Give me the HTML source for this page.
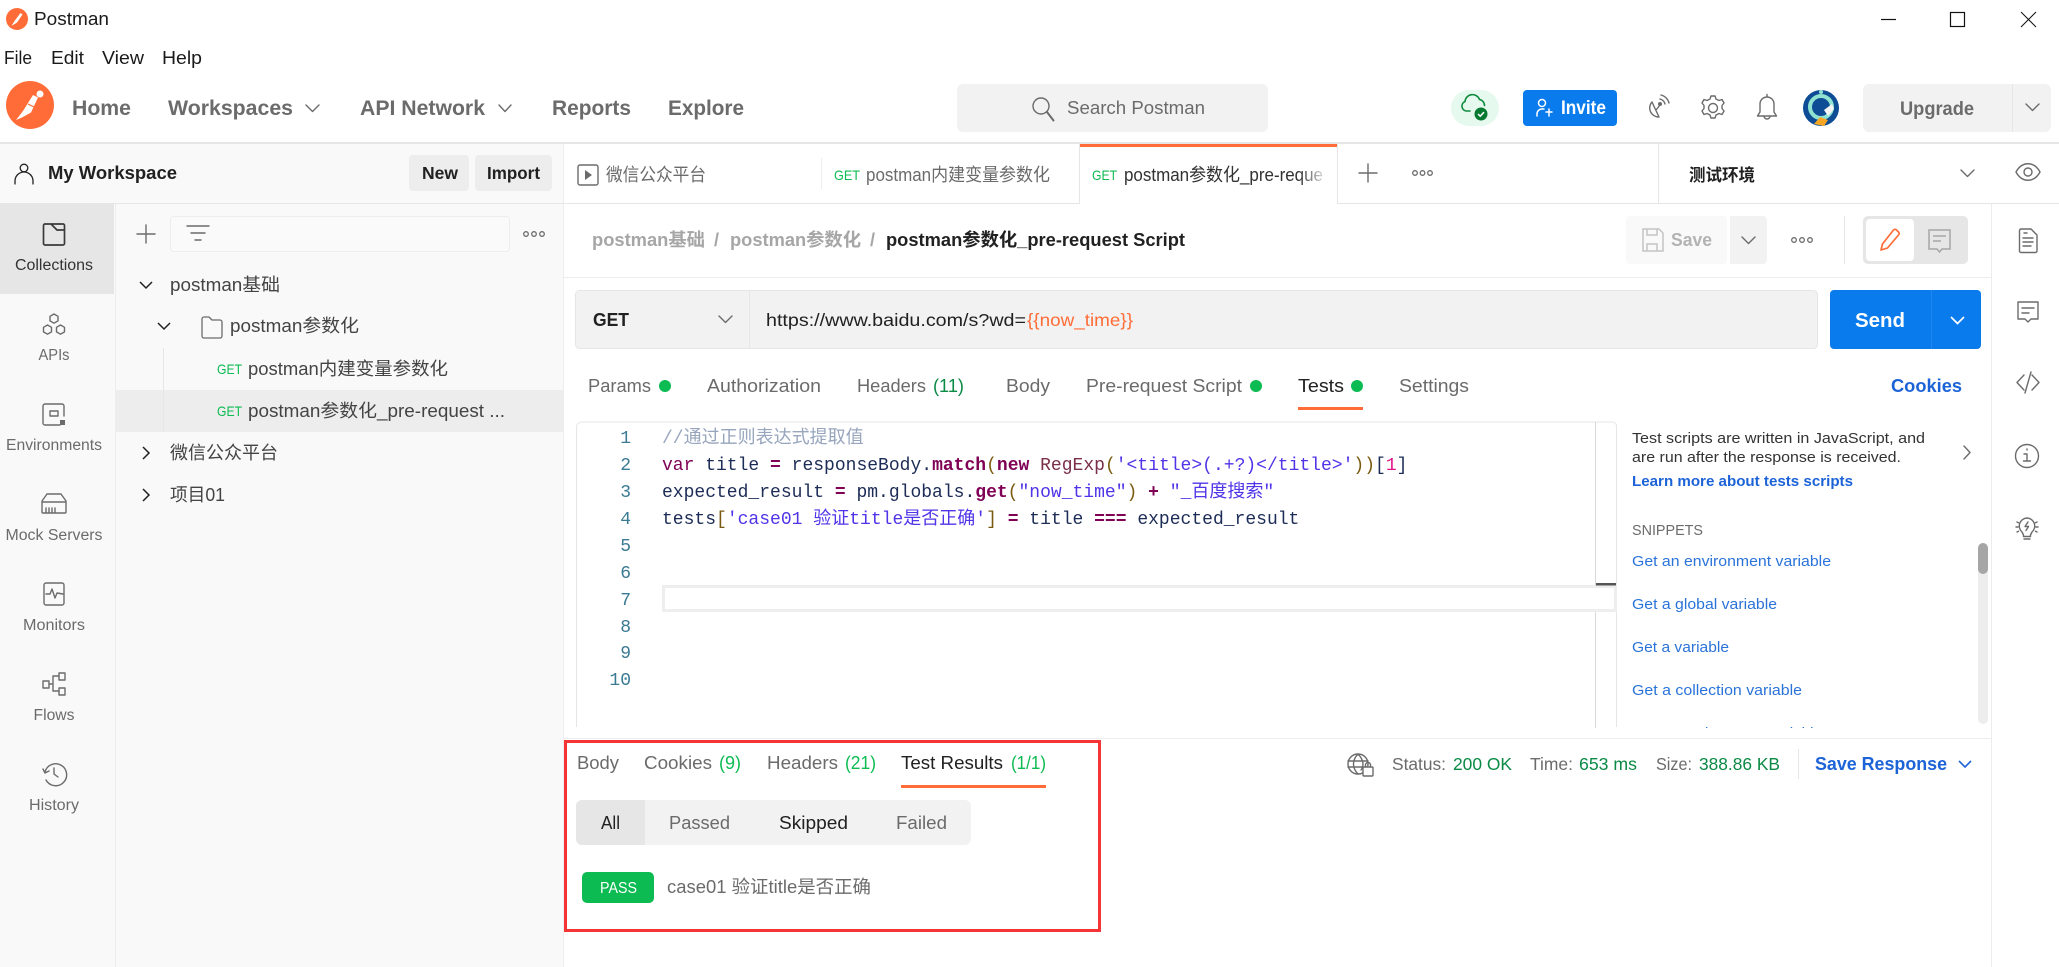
<!DOCTYPE html>
<html lang="zh"><head><meta charset="utf-8"><title>Postman</title>
<style>
html,body{margin:0;padding:0;background:#fff;width:2059px;height:967px;overflow:hidden}
svg{display:block}
text{font-family:"Liberation Sans","Noto Sans CJK SC",sans-serif;font-size:18px;fill:#6b6b6b;white-space:pre}
.b{font-weight:700}
.d{fill:#212121}
.m{font-family:"Liberation Mono","Noto Sans CJK SC",monospace;fill:#1c2c56}
.k{font-weight:700;fill:#7f0055}
.s{fill:#4f34e8}
.n{fill:#3a7a92;font-family:"Liberation Mono",monospace}
.g{fill:#0cbb52;font-size:14px}
.ln{fill:none;stroke:#6b6b6b;stroke-width:1.4;stroke-linecap:round;stroke-linejoin:round}
.a{fill:#1d63d8}
.gr{fill:#0a8a45}
</style></head>
<body>
<svg xmlns="http://www.w3.org/2000/svg" width="2059" height="967" viewBox="0 0 2059 967">
<rect width="2059" height="967" fill="#fff"/>

<!-- title bar -->
<circle cx="17" cy="19" r="11" fill="#ff6c37"/>
<path d="M11.500 26l3-5 6-8 2 1.500-5.500 8z" fill="#fff"/>
<text x="34" y="25" style="font-size:18px;fill:#1a1a1a" textLength="75" lengthAdjust="spacingAndGlyphs">Postman</text>
<text x="4" y="64" style="fill:#1a1a1a" textLength="28" lengthAdjust="spacingAndGlyphs">File</text>
<text x="51" y="64" style="fill:#1a1a1a" textLength="33" lengthAdjust="spacingAndGlyphs">Edit</text>
<text x="102" y="64" style="fill:#1a1a1a" textLength="42" lengthAdjust="spacingAndGlyphs">View</text>
<text x="162" y="64" style="fill:#1a1a1a" textLength="40" lengthAdjust="spacingAndGlyphs">Help</text>
<path d="M1881 19.500h15" stroke="#111" stroke-width="1.200"/>
<rect x="1950.500" y="12.500" width="14" height="14" fill="none" stroke="#111" stroke-width="1.200"/>
<path d="M2021 12l15 15M2036 12l-15 15" stroke="#111" stroke-width="1"/>

<!-- main nav -->
<circle cx="30" cy="105" r="24" fill="#ff6c37"/>
<path d="M16 120l7-9 10-16 5 2.500-7 15-9 5z" fill="#fff"/>
<circle cx="40" cy="94" r="3.500" fill="#fff"/>
<path d="M28 104l8 4" stroke="#ff6c37" stroke-width="1.200"/>
<text class="b" x="72" y="115" style="font-size:21px" textLength="59" lengthAdjust="spacingAndGlyphs">Home</text>
<text class="b" x="168" y="115" style="font-size:21px" textLength="125" lengthAdjust="spacingAndGlyphs">Workspaces</text>
<text class="b" x="360" y="115" style="font-size:21px" textLength="125" lengthAdjust="spacingAndGlyphs">API Network</text>
<text class="b" x="552" y="115" style="font-size:21px" textLength="79" lengthAdjust="spacingAndGlyphs">Reports</text>
<text class="b" x="668" y="115" style="font-size:21px" textLength="76" lengthAdjust="spacingAndGlyphs">Explore</text>
<path class="ln" d="M306 105l6.500 6.500 6.500-6.500M499 105l6 6.500 6-6.500"/>
<rect x="957" y="84" width="311" height="48" rx="6" fill="#f2f2f2"/>
<circle cx="1041" cy="106" r="8" class="ln"/>
<path class="ln" d="M1047 112l6.500 8.500" style="stroke-width:2"/>
<text x="1067" y="114" textLength="138" lengthAdjust="spacingAndGlyphs">Search Postman</text>

<rect x="1451" y="90" width="48" height="36" rx="18" fill="#e5f9ee"/>
<path d="M1470 111h-4a5 5 0 0 1-1-9.500 7.500 7.500 0 0 1 14.500-2 6 6 0 0 1 5 6" fill="none" stroke="#0f8a3f" stroke-width="1.600" stroke-linecap="round"/>
<circle cx="1481" cy="114" r="6.500" fill="#067a30"/>
<path d="M1478 114l2.200 2.200 3.800-4" fill="none" stroke="#fff" stroke-width="1.500"/>
<rect x="1523" y="90" width="94" height="36" rx="4" fill="#097bed"/>
<circle cx="1542" cy="103" r="3.500" fill="none" stroke="#fff" stroke-width="1.500"/>
<path d="M1537 116v-2a5 5 0 0 1 5-5h2M1546 112h6M1549 109v7" fill="none" stroke="#fff" stroke-width="1.500" stroke-linecap="round"/>
<text class="b" x="1561" y="114" style="fill:#fff;font-size:19px" textLength="45" lengthAdjust="spacingAndGlyphs">Invite</text>
<path class="ln" d="M1652 102a9 9 0 0 0 7 15zM1656 110l4-5M1660 99a7 7 0 0 1 5 5M1661 95a11 11 0 0 1 8 8"/>
<circle cx="1660" cy="104" r="2" fill="#6b6b6b"/>
<path class="ln" d="M1711 96h4l1 3 3 1.500 3-1 2 3.500-2 2.500v3l2 2.500-2 3.500-3-1-3 1.500-1 3h-4l-1-3-3-1.500-3 1-2-3.500 2-2.500v-3l-2-2.500 2-3.500 3 1 3-1.500z"/>
<circle class="ln" cx="1713" cy="108" r="4.500"/>
<path class="ln" d="M1767 97a7 7 0 0 0-7 7v8l-2.500 4h19l-2.500-4v-8a7 7 0 0 0-7-7zM1767 97v-2.500M1764 116a3 3 0 0 0 6 0"/>
<circle cx="1821" cy="108" r="18" fill="#0e4d96"/>
<circle cx="1821" cy="107" r="11" fill="none" stroke="#8fe3d0" stroke-width="4"/>
<path d="M1824 110l8-6 2 5-6 7z" fill="#f4f4f4"/>
<path d="M1814 124l6-7 8 3-4 6z" fill="#f5a623"/>
<circle cx="1821" cy="92" r="2" fill="#8fe3d0"/>
<rect x="1863" y="84" width="188" height="48" rx="6" fill="#f2f2f2"/>
<path d="M2012.500 84v48" stroke="#e6e6e6"/>
<text class="b" x="1900" y="115" style="font-size:19px" textLength="74" lengthAdjust="spacingAndGlyphs">Upgrade</text>
<path class="ln" d="M2026 104l6.500 6.500 6.500-6.500"/>

<rect x="0" y="142" width="2059" height="2" fill="#e6e6e6"/>

<!-- left sidebar -->
<rect x="0" y="144" width="563" height="823" fill="#f9f9f9"/>
<rect x="563" y="144" width="1" height="823" fill="#ededed"/>
<rect x="0" y="203" width="2059" height="1" fill="#e6e6e6"/>
<circle class="ln" cx="24" cy="168" r="3.800" style="stroke:#212121;stroke-width:1.300"/>
<path class="ln" d="M15 184v-3a7.500 7.500 0 0 1 18 0v3" style="stroke:#212121;stroke-width:1.300"/>
<text class="b d" x="48" y="179" style="font-size:18.500px" textLength="129" lengthAdjust="spacingAndGlyphs">My Workspace</text>
<rect x="409" y="155" width="60" height="36" rx="4" fill="#ededed"/>
<text class="b d" x="422" y="179" style="font-size:17.500px" textLength="36" lengthAdjust="spacingAndGlyphs">New</text>
<rect x="475" y="155" width="77" height="36" rx="4" fill="#ededed"/>
<text class="b d" x="487" y="179" style="font-size:17.500px" textLength="53" lengthAdjust="spacingAndGlyphs">Import</text>

<rect x="0" y="204" width="114" height="90" fill="#e6e6e6"/>
<rect x="115" y="204" width="1" height="763" fill="#ededed"/>
<path d="M45 224h18a1.500 1.500 0 0 1 1.500 1.500v18a1.500 1.500 0 0 1-1.500 1.500h-18a1.500 1.500 0 0 1-1.500-1.500v-18a1.500 1.500 0 0 1 1.500-1.500zM51 224l6 6h7.500" fill="none" stroke="#3a3a3a" stroke-width="1.700" stroke-linejoin="round"/>
<g style="text-anchor:middle">
<text x="54" y="270" style="font-size:15.500px;fill:#333" textLength="78" lengthAdjust="spacingAndGlyphs">Collections</text>
<text x="54" y="360" style="font-size:15.500px" textLength="31" lengthAdjust="spacingAndGlyphs">APIs</text>
<text x="54" y="450" style="font-size:15.500px" textLength="96" lengthAdjust="spacingAndGlyphs">Environments</text>
<text x="54" y="540" style="font-size:15.500px" textLength="97" lengthAdjust="spacingAndGlyphs">Mock Servers</text>
<text x="54" y="630" style="font-size:15.500px" textLength="62" lengthAdjust="spacingAndGlyphs">Monitors</text>
<text x="54" y="720" style="font-size:15.500px" textLength="41" lengthAdjust="spacingAndGlyphs">Flows</text>
<text x="54" y="810" style="font-size:15.500px" textLength="50" lengthAdjust="spacingAndGlyphs">History</text>
</g>
<path class="ln" d="M54 314l4 2.300v4.600l-4 2.300-4-2.300v-4.600zM47.500 325l4 2.300v4.600l-4 2.300-4-2.300v-4.600zM60.500 325l4 2.300v4.600l-4 2.300-4-2.300v-4.600z"/>
<path class="ln" d="M64 416v-10a2 2 0 0 0-2-2h-17a2 2 0 0 0-2 2v17a2 2 0 0 0 2 2h15"/>
<rect class="ln" x="50" y="411" width="8" height="5"/>
<rect x="60" y="420" width="5" height="5" fill="#6b6b6b"/>
<path class="ln" d="M47 494h14l5 7v11a1 1 0 0 1-1 1h-22a1 1 0 0 1-1-1v-11zM42 502h24M46 513v-5M49 513v-5M52 513v-5M55 513v-5"/>
<rect class="ln" x="44" y="583" width="20" height="22" rx="2"/>
<path class="ln" d="M46 594h4l2-5 3 9 2-5 6 1"/>
<rect class="ln" x="43" y="681" width="6" height="7"/>
<rect class="ln" x="59" y="673" width="6" height="7"/>
<rect class="ln" x="59" y="688" width="6" height="7"/>
<path class="ln" d="M49 684h4M53 676v15M53 676h6M53 691h6"/>
<path class="ln" d="M45 772a11 11 0 1 1 1 8M43 769l2 4 4-2M54 768v6l4 3"/>

<!-- sidebar tree -->
<path class="ln" d="M146 225v18M137 234h18"/>
<rect x="170.500" y="216.500" width="339" height="35" rx="3" fill="#fafafa" stroke="#ededed"/>
<path class="ln" d="M187 226h22M191 233h14M195 240h6"/>
<g fill="none" stroke="#6b6b6b" stroke-width="1.300">
<circle cx="526" cy="234" r="2.300"/><circle cx="534" cy="234" r="2.300"/><circle cx="542" cy="234" r="2.300"/>
</g>
<path d="M140 282l6 6 6-6" fill="none" stroke="#212121" stroke-width="1.500"/>
<text x="170" y="291" textLength="110" lengthAdjust="spacingAndGlyphs" style="fill:#444">postman基础</text>
<path d="M158 323l6 6 6-6" fill="none" stroke="#212121" stroke-width="1.500"/>
<path class="ln" d="M202 336v-17a2 2 0 0 1 2-2h5l3 3h8a2 2 0 0 1 2 2v14a2 2 0 0 1-2 2h-16a2 2 0 0 1-2-2z" style="stroke-width:1.300"/>
<text x="230" y="332" textLength="129" lengthAdjust="spacingAndGlyphs" style="fill:#444">postman参数化</text>
<rect x="116" y="390" width="447" height="42" fill="#ededed"/>
<rect x="163" y="348" width="1" height="84" fill="#e6e6e6"/>
<text class="g" x="217" y="374" textLength="25" lengthAdjust="spacingAndGlyphs">GET</text>
<text x="248" y="375" textLength="200" lengthAdjust="spacingAndGlyphs" style="fill:#444">postman内建变量参数化</text>
<text class="g" x="217" y="416" textLength="25" lengthAdjust="spacingAndGlyphs">GET</text>
<text x="248" y="417" textLength="257" lengthAdjust="spacingAndGlyphs" style="fill:#444">postman参数化_pre-request ...</text>
<path d="M143 459l6-6-6-6M143 501l6-6-6-6" fill="none" stroke="#212121" stroke-width="1.500"/>
<text x="170" y="459" textLength="108" lengthAdjust="spacingAndGlyphs" style="fill:#444">微信公众平台</text>
<text x="170" y="501" textLength="55" lengthAdjust="spacingAndGlyphs" style="fill:#444">项目01</text>

<!-- request tabs -->
<rect x="564" y="144" width="1495" height="59" fill="#fff"/>
<rect x="564" y="203" width="1495" height="1" fill="#e6e6e6"/>
<rect x="578" y="165" width="20" height="20" rx="2" fill="none" stroke="#6b6b6b" stroke-width="1.400"/>
<path d="M585 170v10l7-5z" fill="#6b6b6b"/>
<text x="606" y="181" textLength="100" lengthAdjust="spacingAndGlyphs">微信公众平台</text>
<rect x="821" y="158" width="1" height="31" fill="#ededed"/>
<text class="g" x="834" y="180" textLength="26" lengthAdjust="spacingAndGlyphs">GET</text>
<text x="866" y="181" textLength="184" lengthAdjust="spacingAndGlyphs">postman内建变量参数化</text>
<rect x="1080" y="144" width="257" height="60" fill="#fff"/>
<rect x="1079" y="144" width="1" height="60" fill="#e6e6e6"/>
<rect x="1337" y="144" width="1" height="60" fill="#e6e6e6"/>
<rect x="1080" y="144" width="257" height="3" fill="#ff6c37"/>
<text class="g" x="1092" y="180" textLength="25" lengthAdjust="spacingAndGlyphs">GET</text>
<defs><linearGradient id="fd" x1="0" x2="1" y1="0" y2="0"><stop offset=".88" stop-color="#333"/><stop offset="1" stop-color="#d8d8d8"/></linearGradient></defs>
<text x="1124" y="181" style="fill:url(#fd)" textLength="199" lengthAdjust="spacingAndGlyphs">postman参数化_pre-reque</text>
<path class="ln" d="M1368 164v18M1359 173h18"/>
<g fill="none" stroke="#6b6b6b" stroke-width="1.300">
<circle cx="1415" cy="173" r="2.300"/><circle cx="1422.500" cy="173" r="2.300"/><circle cx="1430" cy="173" r="2.300"/>
</g>
<rect x="1658" y="144" width="1" height="59" fill="#e6e6e6"/>
<text class="b d" x="1689" y="181" style="font-size:17px" textLength="66" lengthAdjust="spacingAndGlyphs">测试环境</text>
<path class="ln" d="M1961 170l6.500 6.500 6.500-6.500"/>
<path class="ln" d="M2016 172c6-11 18-11 24 0-6 11-18 11-24 0z"/>
<circle class="ln" cx="2028" cy="172" r="4"/>

<!-- breadcrumb -->
<text class="b" x="592" y="246" style="fill:#a6a6a6" textLength="113" lengthAdjust="spacingAndGlyphs">postman基础</text>
<text class="b" x="714" y="246" style="fill:#a6a6a6">/</text>
<text class="b" x="730" y="246" style="fill:#a6a6a6" textLength="131" lengthAdjust="spacingAndGlyphs">postman参数化</text>
<text class="b" x="870" y="246" style="fill:#a6a6a6">/</text>
<text class="b d" x="886" y="246" textLength="299" lengthAdjust="spacingAndGlyphs">postman参数化_pre-request Script</text>
<rect x="1626" y="216" width="101" height="48" rx="4" fill="#f9f9f9"/>
<path d="M1643 229h16l4 4v18h-20z" fill="none" stroke="#c4c4c4" stroke-width="1.500"/>
<path d="M1647 229v6h10v-6M1647 251v-7h10v7" fill="none" stroke="#c4c4c4" stroke-width="1.500"/>
<text class="b" x="1671" y="246" style="fill:#b3b3b3" textLength="41" lengthAdjust="spacingAndGlyphs">Save</text>
<path d="M1730 216h33a4 4 0 0 1 4 4v40a4 4 0 0 1-4 4h-33z" fill="#f2f2f2"/>
<path class="ln" d="M1742 237l6.500 6.500 6.500-6.500"/>
<g fill="none" stroke="#6b6b6b" stroke-width="1.300">
<circle cx="1794" cy="240" r="2.300"/><circle cx="1802" cy="240" r="2.300"/><circle cx="1810" cy="240" r="2.300"/>
</g>
<rect x="1844" y="216" width="1" height="48" fill="#e6e6e6"/>
<rect x="1863" y="216" width="105" height="48" rx="5" fill="#e6e6e6"/>
<rect x="1866" y="219" width="48" height="42" rx="4" fill="#fff"/>
<path d="M1881 250l1.500-6 11-14a2 2 0 0 1 3 0l2 2a2 2 0 0 1 0 3l-11 13z" fill="none" stroke="#ff6c37" stroke-width="1.700" stroke-linejoin="round"/>
<path d="M1929 230h21v19h-8l-2.500 3-2.500-3h-8zM1933 236h13M1933 241h8" fill="none" stroke="#a6a6a6" stroke-width="1.500"/>
<rect x="1991" y="204" width="1" height="763" fill="#ededed"/>
<rect x="564" y="277" width="1427" height="1" fill="#ededed"/>

<!-- right bar icons -->
<path class="ln" d="M2021 229h10l6 6v16a1.500 1.500 0 0 1-1.500 1.500h-14.500a1.500 1.500 0 0 1-1.500-1.500v-20.500a1.500 1.500 0 0 1 1.500-1.500zM2024 233h3M2023 238h10M2023 242h10M2023 246h8"/>
<path class="ln" d="M2018 302h20v17h-7l-3 3-3-3h-7zM2022 308h12M2022 313h7"/>
<path class="ln" d="M2024 375l-7 7.500 7 7.500M2032 375l7 7.500-7 7.500M2031 372l-6 21"/>
<circle class="ln" cx="2027" cy="456" r="11.500"/>
<path class="ln" d="M2027 449v1M2024 454h3v7M2023.500 461h7"/>
<path class="ln" d="M2027 518a8 8 0 0 0-5 14l1.500 3v1.500h7v-1.500l1.500-3a8 8 0 0 0-5-14zM2028 522l-3 4.500h3.500l-2.500 4M2024 539h6M2017 522l1.500 .8M2016 527h2M2017 532l1.500-.8M2037 522l-1.500 .8M2038 527h-2M2037 532l-1.500-.8"/>

<!-- URL row -->
<rect x="575.500" y="290.500" width="1242" height="58" rx="4" fill="#f2f2f2" stroke="#e6e6e6"/>
<rect x="749" y="291" width="1" height="57" fill="#e6e6e6"/>
<text class="b d" x="593" y="326" style="font-size:18px" textLength="36" lengthAdjust="spacingAndGlyphs">GET</text>
<path class="ln" d="M719 316l6.500 6.500 6.500-6.500"/>
<text x="766" y="326" style="fill:#212121;font-size:17.500px" textLength="260" lengthAdjust="spacingAndGlyphs">https://www.baidu.com/s?wd=</text>
<text x="1027" y="326" style="fill:#ff6c37;font-size:17.500px" textLength="106" lengthAdjust="spacingAndGlyphs">{{now_time}}</text>
<path d="M1834 290h143a4 4 0 0 1 4 4v51a4 4 0 0 1-4 4h-143a4 4 0 0 1-4-4v-51a4 4 0 0 1 4-4z" fill="#097bed"/>
<rect x="1931" y="290" width="1" height="59" fill="#1f87ee"/>
<text class="b" x="1855" y="327" style="fill:#fff;font-size:20px" textLength="50" lengthAdjust="spacingAndGlyphs">Send</text>
<path d="M1951 317l6.500 6.500 6.500-6.500" fill="none" stroke="#fff" stroke-width="1.700"/>

<!-- request sub tabs -->
<text x="588" y="392" textLength="63" lengthAdjust="spacingAndGlyphs">Params</text>
<circle cx="665" cy="386" r="6" fill="#0cbb52"/>
<text x="707" y="392" textLength="114" lengthAdjust="spacingAndGlyphs">Authorization</text>
<text x="857" y="392" textLength="69" lengthAdjust="spacingAndGlyphs">Headers</text>
<text x="933" y="392" class="gr" textLength="31" lengthAdjust="spacingAndGlyphs">(11)</text>
<text x="1006" y="392" textLength="44" lengthAdjust="spacingAndGlyphs">Body</text>
<text x="1086" y="392" textLength="156" lengthAdjust="spacingAndGlyphs">Pre-request Script</text>
<circle cx="1256" cy="386" r="6" fill="#0cbb52"/>
<text x="1298" y="392" class="d" textLength="46" lengthAdjust="spacingAndGlyphs">Tests</text>
<circle cx="1357" cy="386" r="6" fill="#0cbb52"/>
<rect x="1298" y="407" width="65" height="3" fill="#ff6c37"/>
<text x="1399" y="392" textLength="70" lengthAdjust="spacingAndGlyphs">Settings</text>
<text class="b a" x="1891" y="392" textLength="71" lengthAdjust="spacingAndGlyphs">Cookies</text>

<!-- editor -->
<path d="M576.500 727v-300a5 5 0 0 1 5-5h1031a4 4 0 0 1 4 4v301" fill="none" stroke="#e6e6e6"/>
<rect x="1595" y="422" width="1" height="306" fill="#d9d9d9"/>
<g style="text-anchor:end;font-size:18px">
<text class="n" x="631" y="443">1</text><text class="n" x="631" y="470">2</text><text class="n" x="631" y="497">3</text><text class="n" x="631" y="524">4</text><text class="n" x="631" y="551">5</text><text class="n" x="631" y="578">6</text><text class="n" x="631" y="605">7</text><text class="n" x="631" y="632">8</text><text class="n" x="631" y="658">9</text><text class="n" x="631" y="685">10</text>
</g>
<rect x="663.500" y="586.500" width="952" height="24" fill="#fff" stroke="#eeeeee" stroke-width="3"/>
<rect x="1596" y="583" width="20" height="2.500" fill="#555"/>
<text class="m" x="662" y="443" style="fill:#97a5bd">//通过正则表达式提取值</text>
<text class="m" x="662" y="470"><tspan class="k" style="font-weight:400">var</tspan> title <tspan class="k">=</tspan> responseBody.<tspan class="k">match</tspan><tspan style="fill:#7a5a10">(</tspan><tspan class="k">new</tspan> <tspan style="fill:#7a2e4a">RegExp</tspan><tspan style="fill:#7a5a10">(</tspan><tspan class="s">'&lt;title&gt;(.+?)&lt;/title&gt;'</tspan><tspan style="fill:#7a5a10">))</tspan>[<tspan style="fill:#e0128a">1</tspan>]</text>
<text class="m" x="662" y="497">expected_result <tspan class="k">=</tspan> pm.globals.<tspan class="k">get</tspan><tspan style="fill:#7a5a10">(</tspan><tspan class="s">"now_time"</tspan><tspan style="fill:#7a5a10">)</tspan> <tspan class="k">+</tspan> <tspan class="s">"_百度搜索"</tspan></text>
<text class="m" x="662" y="524">tests<tspan style="fill:#7a5a10">[</tspan><tspan class="s">'case01 验证title是否正确'</tspan><tspan style="fill:#7a5a10">]</tspan> <tspan class="k">=</tspan> title <tspan class="k">===</tspan> expected_result</text>

<!-- help panel -->
<text x="1632" y="443" style="font-size:15px;fill:#333" textLength="293" lengthAdjust="spacingAndGlyphs">Test scripts are written in JavaScript, and</text>
<text x="1632" y="462" style="font-size:15px;fill:#333" textLength="269" lengthAdjust="spacingAndGlyphs">are run after the response is received.</text>
<text class="b a" x="1632" y="486" style="font-size:15px" textLength="221" lengthAdjust="spacingAndGlyphs">Learn more about tests scripts</text>
<path class="ln" d="M1964 446l6 6.500-6 6.500"/>
<text x="1632" y="535" style="font-size:15px" textLength="71" lengthAdjust="spacingAndGlyphs">SNIPPETS</text>
<text x="1632" y="566" style="font-size:15px;fill:#2a73d9" textLength="199" lengthAdjust="spacingAndGlyphs">Get an environment variable</text>
<text x="1632" y="609" style="font-size:15px;fill:#2a73d9" textLength="145" lengthAdjust="spacingAndGlyphs">Get a global variable</text>
<text x="1632" y="652" style="font-size:15px;fill:#2a73d9" textLength="97" lengthAdjust="spacingAndGlyphs">Get a variable</text>
<text x="1632" y="695" style="font-size:15px;fill:#2a73d9" textLength="170" lengthAdjust="spacingAndGlyphs">Get a collection variable</text>
<text x="1632" y="738" style="font-size:15px;fill:#2a73d9" textLength="190" lengthAdjust="spacingAndGlyphs">Set an environment variable</text>
<rect x="1625" y="728" width="350" height="12" fill="#fff"/>
<rect x="1978" y="543" width="10" height="181" rx="5" fill="#ededed"/>
<rect x="1978" y="543" width="10" height="31" rx="5" fill="#a6a6a6"/>

<!-- response -->
<rect x="564" y="738" width="1427" height="1" fill="#ededed"/>
<rect x="565.500" y="741.500" width="534" height="189" fill="none" stroke="#f53535" stroke-width="3"/>
<text x="577" y="769" textLength="42" lengthAdjust="spacingAndGlyphs">Body</text>
<text x="644" y="769" textLength="68" lengthAdjust="spacingAndGlyphs">Cookies</text>
<text x="719" y="769" textLength="22" lengthAdjust="spacingAndGlyphs" style="fill:#0cbb52">(9)</text>
<text x="767" y="769" textLength="71" lengthAdjust="spacingAndGlyphs">Headers</text>
<text x="845" y="769" textLength="31" lengthAdjust="spacingAndGlyphs" style="fill:#0cbb52">(21)</text>
<text x="901" y="769" textLength="102" lengthAdjust="spacingAndGlyphs" class="d">Test Results</text>
<text x="1011" y="769" textLength="35" lengthAdjust="spacingAndGlyphs" style="fill:#0cbb52">(1/1)</text>
<rect x="901" y="785" width="145" height="3" fill="#ff6c37"/>
<rect x="576" y="800" width="395" height="45" rx="6" fill="#f2f2f2"/>
<path d="M582 800h63v45h-63a6 6 0 0 1-6-6v-33a6 6 0 0 1 6-6z" fill="#e6e6e6"/>
<text x="601" y="829" class="d" textLength="19" lengthAdjust="spacingAndGlyphs">All</text>
<text x="669" y="829" textLength="61" lengthAdjust="spacingAndGlyphs">Passed</text>
<text x="779" y="829" class="d" textLength="69" lengthAdjust="spacingAndGlyphs">Skipped</text>
<text x="896" y="829" textLength="51" lengthAdjust="spacingAndGlyphs">Failed</text>
<rect x="582" y="872" width="72" height="31" rx="5" fill="#0cbb52"/>
<text x="600" y="893" style="fill:#fff;font-size:15.500px" textLength="37" lengthAdjust="spacingAndGlyphs">PASS</text>
<text x="667" y="893" textLength="204" lengthAdjust="spacingAndGlyphs">case01 验证title是否正确</text>

<circle class="ln" cx="1358" cy="764" r="10"/>
<path class="ln" d="M1348 761h20M1348 767h14M1358 754c-6 6-6 14 0 20M1358 754c6 6 6 12 3 16"/>
<rect x="1363" y="767" width="10" height="9" rx="1" fill="#fff" stroke="#6b6b6b" stroke-width="1.400"/>
<path class="ln" d="M1365.500 767v-2a2.500 2.500 0 0 1 5 0v2"/>
<text x="1392" y="770" style="font-size:17.500px" textLength="54" lengthAdjust="spacingAndGlyphs">Status:</text>
<text x="1453" y="770" class="gr" style="font-size:17.500px" textLength="59" lengthAdjust="spacingAndGlyphs">200 OK</text>
<text x="1530" y="770" style="font-size:17.500px" textLength="43" lengthAdjust="spacingAndGlyphs">Time:</text>
<text x="1579" y="770" class="gr" style="font-size:17.500px" textLength="58" lengthAdjust="spacingAndGlyphs">653 ms</text>
<text x="1656" y="770" style="font-size:17.500px" textLength="36" lengthAdjust="spacingAndGlyphs">Size:</text>
<text x="1699" y="770" class="gr" style="font-size:17.500px" textLength="81" lengthAdjust="spacingAndGlyphs">388.86 KB</text>
<rect x="1798" y="749" width="1" height="30" fill="#e6e6e6"/>
<text class="b a" x="1815" y="770" style="font-size:18.500px" textLength="132" lengthAdjust="spacingAndGlyphs">Save Response</text>
<path d="M1959 761l6 6 6-6" fill="none" stroke="#1d63d8" stroke-width="1.600"/>
</svg>
</body></html>
